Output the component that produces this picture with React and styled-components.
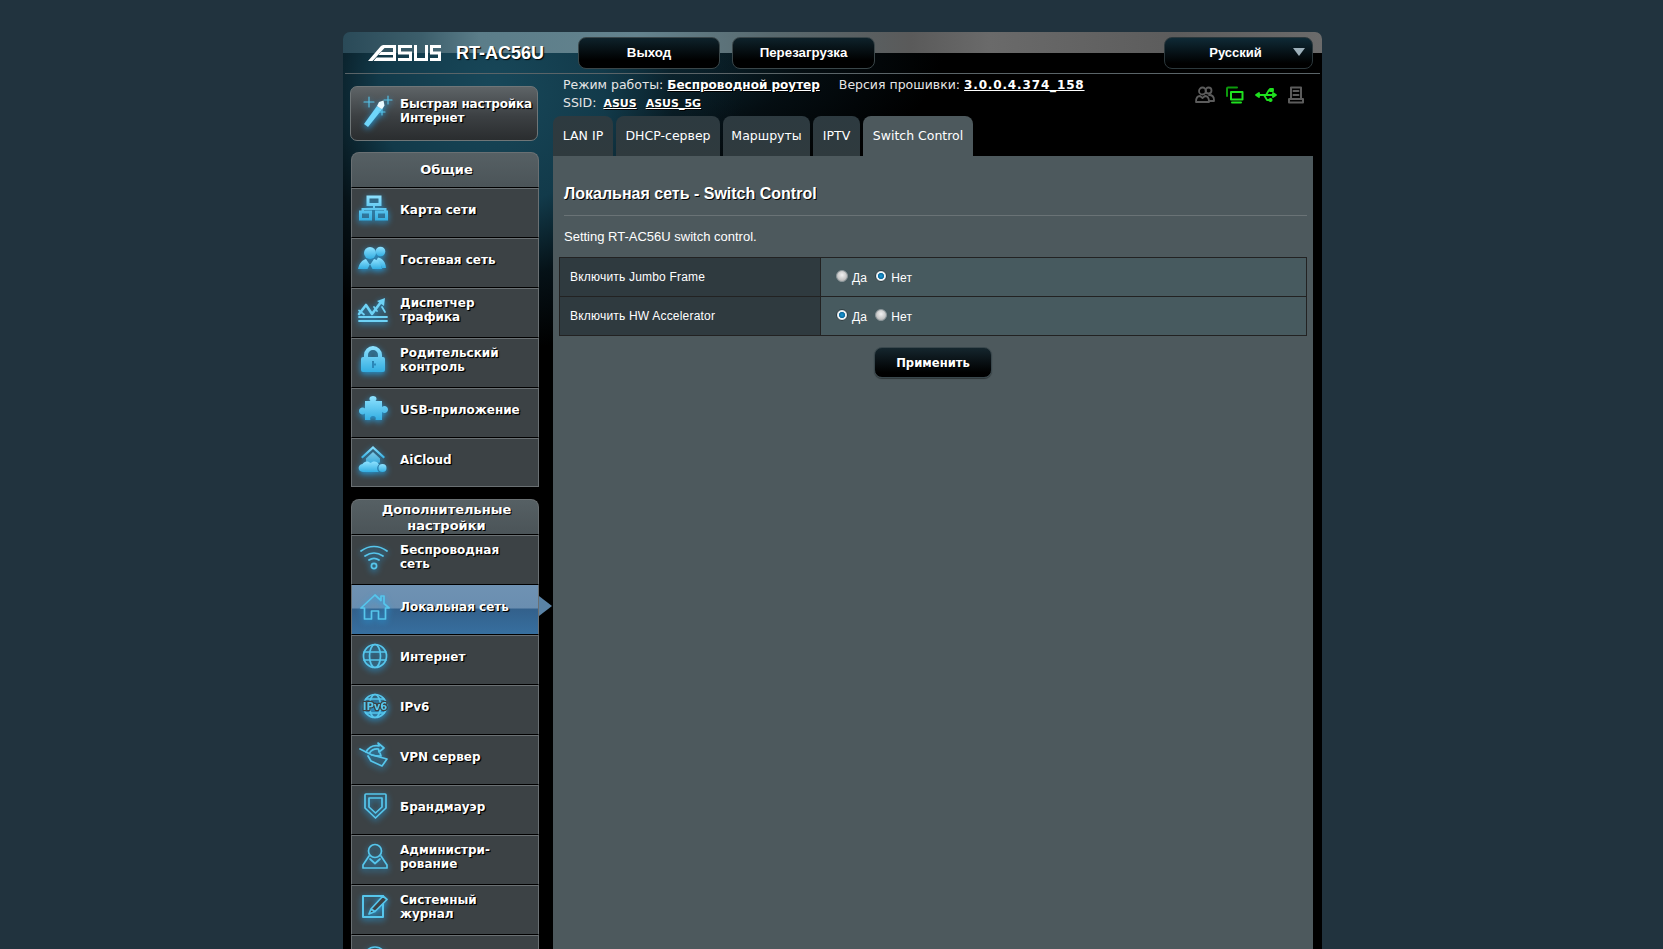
import React from "react";
import styled, { createGlobalStyle, css } from "styled-components";

const Global = createGlobalStyle`
  html, body { margin: 0; padding: 0; height: 100%; overflow: hidden; background: #21333e; }
  #root { height: 100%; }
`;
const verdana = `"DejaVu Sans", Verdana, sans-serif`;
const arial = `"Liberation Sans", Arial, sans-serif`;

const Page = styled.div`
  height: 100vh; overflow: hidden; background: #21333e; padding: 32px 0 0 343px; box-sizing: border-box;
`;
const Panel = styled.div`
  width: 979px; height: 1100px; border-radius: 7px 7px 0 0; overflow: hidden; color: #fff;
  background:
    linear-gradient(90deg, #2a4a58 0, #3c5e6b 8%, #5b7d89 14%, #64838e 30%, #58696e 44%, #5a5a5a 58%, #6a6a6a 66%, #5c5c5c 85%, #6b6b6b 100%) 0 0 / 100% 21px no-repeat,
    radial-gradient(ellipse 250px 260px at 150px 60px, #18485a 0, #123a4a 45%, rgba(10,32,42,.55) 72%, rgba(0,0,0,0) 100%),
    radial-gradient(ellipse 340px 150px at 260px 20px, #0f3442 0, rgba(10,30,40,.45) 60%, rgba(0,0,0,0) 100%),
    #000;
`;
const TopBar = styled.header`
  height: 41px; border-bottom: 1px solid #5a6468; margin: 0 2px; display: flex; align-items: flex-start;
`;
const Logo = styled.svg`
  width: 73px; height: 16px; margin: 13px 0 0 23px; flex: none; fill: #fff;
`;
const Model = styled.div`
  font: bold 18px/20px ${arial}; margin: 11px 0 0 15px; width: 122px; flex: none; text-shadow: 1px 1px 1px #000;
`;
const TopButton = styled.button`
  width: ${p => p.$w}px; height: 32px; margin: 5px 12px 0 0; flex: none; border-radius: 8px;
  background: linear-gradient(180deg, #0e222b 0, #000 75%); border: 1px solid #3a4649; color: #fff;
  font: bold 13.3px ${arial}; padding: 0 0 2px; text-shadow: 1px 1px 0 #000;
`;
const LangBox = styled.div`
  position: relative; margin: 5px 7px 0 auto; width: 149px; height: 32px; box-sizing: border-box;
  border-radius: 8px; border: 1px solid #2c383c; background: linear-gradient(180deg, #0f2a36 0, #000 85%);
  font: bold 13px/30px ${arial}; text-align: center; padding-right: 6px;
  &::after {
    content: ""; position: absolute; right: 7px; top: 10px; width: 0; height: 0;
    border-left: 6px solid transparent; border-right: 6px solid transparent; border-top: 8px solid #9db0ba;
  }
`;
const Columns = styled.div` display: flex; align-items: flex-start; `;
const Sidebar = styled.nav`
  width: 210px; flex: none; padding: 12px 0 0 7px; box-sizing: border-box;
`;
const QuickButton = styled.div`
  width: 188px; height: 55px; box-sizing: border-box; border-radius: 7px; border: 1px solid #6f7678;
  background: linear-gradient(180deg, #5e6467 0, #3c4043 55%, #2a2d2f 100%);
  display: flex; align-items: center; padding: 0 0 6px 10px; gap: 5px;
  margin-bottom: 11px;
`;
const MenuLabel = styled.span`
  font: bold 12px/14px ${verdana}; text-shadow: 1px 1px 0 #000, 1px 1px 1px #000; color: #fff;
`;
const QuickLabel = styled(MenuLabel)` letter-spacing: -.15px; `;
const Group = styled.div`
  width: 188px; margin-left: 1px; margin-bottom: 12px;
`;
const GroupTitle = styled.div`
  height: 35px; box-sizing: border-box; border: 1px solid #6a7073; border-bottom: 0; border-radius: 8px 8px 0 0;
  background: linear-gradient(180deg, #566064 0, #4b5458 100%); padding: ${p => p.$two ? 1 : 0}px 0 0 3px;
  font: bold 13px/16px ${verdana}; text-align: center; text-shadow: 1px 1px 0 #000;
  display: flex; align-items: center; justify-content: center;
`;
const Item = styled.div`
  height: 50px; box-sizing: border-box; position: relative; display: flex; align-items: center;
  gap: 11px; padding: 0 0 5px 5px;
  border: 1px solid #6a7073; border-width: 1px 1px 0 1px;
  border-top: 1px solid #000;
  background: linear-gradient(180deg, #6a7073 0, #6a7073 1px, #3c4245 1px);
  ${p => p.$active && css`
    background: linear-gradient(180deg, #6f92b3 0, #6a8eb0 46%, #33618c 50%, #376f9f 100%);
    &::after {
      content: ""; position: absolute; left: 100%; top: 11px; width: 0; height: 0; margin-left: 1px;
      border-top: 10px solid transparent; border-bottom: 10px solid transparent; border-left: 13px solid #5a83a6;
    }
  `}
  ${p => p.$last && css` border-bottom: 1px solid #6a7073; padding-bottom: 4px; `}
`;
const Icon = styled.svg`
  width: 32px; height: 32px; flex: none;
  fill: ${p => p.$fill ? "url(#cy)" : "none"};
  stroke: ${p => p.$fill ? "none" : "#56c6ec"};
  stroke-width: 1.7; stroke-linecap: round; stroke-linejoin: round;
  filter: drop-shadow(0 2px 3px rgba(35,165,235,.9));
  transform: translateX(${p => p.$dx || 0}px);
`;
const Main = styled.main` flex: 1; min-width: 0; padding-right: 9px; `;
const Info = styled.div`
  height: 42px; padding: 2px 0 0 10px; box-sizing: border-box; position: relative;
  font: 12.5px/18px ${verdana}; color: #e6e6e6;
`;
const InfoLine = styled.div` white-space: nowrap; `;
const InfoLink = styled.a`
  font: bold ${p => p.$small ? 11 : 12}px/18px ${verdana}; color: #fff; text-decoration: underline;
  margin-left: ${p => p.$ml || 0}px; margin-right: ${p => p.$mr || 0}px; text-shadow: 1px 1px 0 #000;
  letter-spacing: ${p => p.$ls || 0}px;
`;
const Status = styled.div`
  position: absolute; top: 12px; left: 642px; display: flex; gap: 11px; align-items: center;
`;
const StatusIcon = styled.svg`
  width: ${p => p.$w}px; height: 18px; fill: none; stroke: ${p => p.$on ? "#1fe01f" : "#5c5c5c"};
  stroke-width: 1.8; stroke-linecap: round; stroke-linejoin: round;
`;
const Tabs = styled.div` display: flex; gap: 3px; height: 40px; `;
const Tab = styled.div`
  width: ${p => p.$w}px; height: 40px; box-sizing: border-box; border-radius: 8px 8px 0 0; text-align: center;
  font: 12.5px/40px ${verdana}; color: #fff; white-space: nowrap;
  background: ${p => p.$active ? "#4d595d" : "linear-gradient(180deg, #2d3a40 0, #2f3a3e 100%)"};
`;
const Content = styled.section`
  background: #4d595d; height: 900px; padding: 28px 6px 0 6px; box-sizing: border-box;
`;
const Title = styled.h1`
  margin: 0 0 0 5px; font: bold 16px/20px ${arial}; text-shadow: 1px 1px 0 #000; padding-bottom: 11px;
  border-bottom: 1px solid #6a7376;
`;
const Desc = styled.p` margin: 12px 0 11px 5px; font: 13px/18px ${arial}; color: #fff; `;
const Table = styled.table`
  width: 748px; border-collapse: collapse; table-layout: fixed; margin-top: 0;
`;
const Th = styled.th`
  width: 261px; height: 39px; box-sizing: border-box; border: 1px solid #222; padding: 0 0 0 10px; background: #2f3a3f;
  font: 12px ${arial}; letter-spacing: .2px; text-align: left; color: #fff;
`;
const Td = styled.td`
  height: 39px; box-sizing: border-box; border: 1px solid #222; padding: 2px 0 0 15px; background: #475a5f;
  font: 12px ${arial}; letter-spacing: .2px; color: #fff;
`;
const RadioLabel = styled.label`
  display: inline-flex; align-items: flex-start; margin-right: 8px; line-height: 15px;
`;
const Radio = styled.input.attrs({ type: "radio" })`
  appearance: none; width: 12px; height: 12px; border-radius: 50%; margin: -1px 4px 0 0; flex: none;
  border: 1px solid #8a9599;
  background: radial-gradient(circle at 50% 40%, #f2f2f2 0, #c9c9c9 55%, #a5a5a5 100%);
  &:checked {
    background: radial-gradient(circle at 50% 50%, #1b9ad6 0, #0b6a9e 40%, #f2f6f8 46%, #cfd7da 100%);
    border-color: #2b383c;
  }
`;
const ApplyRow = styled.div` display: flex; justify-content: center; margin-top: 11px; `;
const Apply = styled.button`
  width: 118px; height: 31px; border-radius: 8px; border: 1px solid #39474c; color: #fff;
  background: linear-gradient(180deg, #15262e 0, #000 85%);
  font: bold 11.6px ${verdana}; text-shadow: 1px 1px 0 #000; padding: 0;
  box-shadow: 0 1px 1px rgba(0,0,0,.4);
`;

const P = ({ d, ...r }) => <path d={d} {...r} />;
const line = "#6ed2f5";
const icons = {
  map: { fill: 1, g: <P fillRule="evenodd" d="M9.500 1.500h15v10.500H18v2h11.500v2.500H31v10H18v-10h9v-.5H7v.5h8v10H2v-10h2.500V14H16v-2H9.500zM12.500 4.500V9h9V4.500zM5 19.500V24h7v-4.500zM21 19.500V24h7v-4.500z" /> },
  guest: { fill: 1, g: <>
    <circle cx="13" cy="9" r="6" /><circle cx="23.500" cy="7.500" r="4.800" />
    <P d="M29 24c-.5-6-3-9.500-8-10.500l-2 3.500c3 1.500 5 4 6 7z" />
    <P d="M1 25c1.500-6 4-9 8-10l4 6 4-6c4 1 7 4 8 10h-9.500L13 20l-2.500 5z" />
  </> },
  traffic: { fill: 1, g: <>
    <path d="M2 20L9 11l6 9 9-12" fill="none" stroke={line} strokeWidth="2.600" />
    <path d="M20 7l8-3-1 8z" fill={line} />
    <path d="M2 16.500l5 4M2 23h28M2 27h28M17 13l3 4M25 13l3 5" fill="none" stroke={line} strokeWidth="1.800" />
  </> },
  lock: { fill: 1, g: <P fillRule="evenodd" d="M7 13V11a9 9 0 0118 0v2h1a2 2 0 012 2v11a2 2 0 01-2 2H6a2 2 0 01-2-2V15a2 2 0 012-2zM11 13h10v-2a5 5 0 00-10 0zM15 17v7h2v-2.500h2v-2h-2V17z" /> },
  puzzle: { fill: 1, g: <P d="M8 7h5.500c-2-2-1-5 2.500-5s4.500 3 2.500 5H25v6c2-2 6-1 6 2.500S27 20 25 18v8h-6.500c1-3-.5-4-2.500-4s-3.500 1-2.500 4H8v-6.500C6 21.500 2 20.500 2 17s4-4.500 6-2.500z" /> },
  cloud: { fill: 1, g: <>
    <P d="M4 13L16 2l12 11-1.500 1.500L16 5 5.500 14.500z" />
    <P d="M9 14.500L16 8l7 6.500v4c-2 0-4 1-5 2.500-2-2-5.500-2-8-.5l-1-.5z" opacity=".8" />
    <P d="M6 28c-5.500 0-6-7-.5-8 1.500-3 6-3.500 8-1 2.500-2.500 7-2 8.500 1.500-2.500 2-2.500 5.500 0 7.500z" />
    <circle cx="25.500" cy="24" r="4" />
  </> },
  wifi: { dx: 1, g: <><P d="M3 10c8-6 18-6 26 0M7 15c6-4 12-4 18 0M11 19c3-2 7-2 10 0" /><circle cx="16" cy="25" r="2.600" /></> },
  home: { dx: 2, g: <P d="M2 17L16 4l6 5.500V5h3v7.500L30 17h-3.500v11h-7v-8h-7v8h-7V17z" /> },
  globe: { dx: 2, g: <><circle cx="16" cy="15" r="11.500" /><ellipse cx="16" cy="15" rx="5.500" ry="11.500" /><P d="M5 11h22M5 19h22" /></> },
  ipv6: { dx: 2, g: <>
    <circle cx="16" cy="15" r="11.500" /><ellipse cx="16" cy="15" rx="5.500" ry="11.500" /><P d="M7 8h18M7 22h18" />
    <text x="16" y="18.500" textAnchor="middle" fontSize="10" fontFamily={verdana} fontWeight="700" fill="#56c6ec" stroke="#3c4245" strokeWidth="2.500" paintOrder="stroke">IPv6</text>
  </> },
  vpn: { dx: 2, g: <>
    <P d="M1 8l12 6 15 4-5 7-11-5-3-5" />
    <P d="M7 11c3-5 8-7 13-6l-1-3 6 5-5 4-.5-3c-4-.5-7 1-9 4" />
    <P d="M13 14c3 1 6 1 9 1l-1-3" />
  </> },
  shield: { dx: 2, g: <><P d="M7 3h19c.5 0 1 .5 1 1v13l-10.500 10L6 17V4c0-.5.5-1 1-1z" /><P d="M10 7h13v9l-6.500 6L10 16z" /></> },
  admin: { dx: 2, g: <><circle cx="16" cy="10" r="6.500" /><P d="M10 15L4 24v3h24v-3l-6-9M11 18l5 4.500 5-4.500" /></> },
  log: { dx: 2, g: <>
    <rect x="4" y="5" width="20" height="21" strokeWidth="2" />
    <P d="M10 23l2-5L24 5l4 3.500-12 12zM12 18l4 2.500" fill="#3c4245" />
  </> },
  tools: { dx: 2, g: <circle cx="16" cy="17" r="11" /> },
};
const MIcon = ({ n }) => <Icon viewBox="0 0 32 32" $fill={icons[n].fill} $dx={icons[n].dx}>{icons[n].g}</Icon>;

const general = [["map", ["Карта сети"]], ["guest", ["Гостевая сеть"]], ["traffic", ["Диспетчер", "трафика"]], ["lock", ["Родительский", "контроль"]], ["puzzle", ["USB-приложение"]], ["cloud", ["AiCloud"]]];
const advanced = [["wifi", ["Беспроводная", "сеть"]], ["home", ["Локальная сеть"], 1], ["globe", ["Интернет"]], ["ipv6", ["IPv6"]], ["vpn", ["VPN сервер"]], ["shield", ["Брандмауэр"]], ["admin", ["Администри-", "рование"]], ["log", ["Системный", "журнал"]], ["tools", []]];

const MenuItem = ({ it, last }) => (
  <Item $active={it[2]} $last={last}>
    <MIcon n={it[0]} />
    {it[1].length > 0 && <MenuLabel>{it[1].map((l, i) => <React.Fragment key={i}>{i > 0 && <br />}{l}</React.Fragment>)}</MenuLabel>}
  </Item>
);

export default function App() {
  return (
    <Page>
      <Global />
      <svg width="0" height="0" style={{ position: "absolute" }}>
        <defs>
          <linearGradient id="cy" x1="0" y1="0" x2="0" y2="1">
            <stop offset="0" stopColor="#8fe2ff" />
            <stop offset="1" stopColor="#33aee2" />
          </linearGradient>
        </defs>
      </svg>
      <Panel>
        <TopBar>
          <Logo viewBox="0 0 73 16">
            <path d="M0 16L12.500 1.500C13.500.5 14.500 0 16 0h12v3H16.500L4.500 16z" />
            <path d="M25 0h3v16h-3zM13 7h13v3H10.500zM8.500 12.500H26V16H5.500z" />
            <path d="M30 0h14v3H33v3.500h11V16H30v-3h11V9.500H30z" />
            <path d="M46 0h3v13h8V0h3v16H46z" />
            <path d="M62 0h11v3H65v3.500h8V16H62v-3h8V9.500h-8z" />
          </Logo>
          <Model>RT-AC56U</Model>
          <TopButton $w={142}>Выход</TopButton>
          <TopButton $w={143}>Перезагрузка</TopButton>
          <LangBox>Русский</LangBox>
        </TopBar>
        <Columns>
          <Sidebar>
            <QuickButton>
              <Icon viewBox="0 0 34 34" style={{ width: 34, height: 34, flex: "none" }}>
                <path d="M7 33l-4-3L16 12l5 3.500z" fill="#6fd6fb" stroke="none" />
                <path d="M16 12l5 3.500 2.500-4-1-5-4.500 1.500z" fill="#eafaff" stroke="none" />
                <path d="M8 3v10M3 8h10M27 2v8M23 6h8M21 15v6M18 18h6" strokeWidth="1.100" />
              </Icon>
              <QuickLabel>Быстрая настройка<br />Интернет</QuickLabel>
            </QuickButton>
            <Group>
              <GroupTitle>Общие</GroupTitle>
              {general.map((it, i) => <MenuItem key={i} it={it} last={i === general.length - 1} />)}
            </Group>
            <Group>
              <GroupTitle $two>Дополнительные<br />настройки</GroupTitle>
              {advanced.map((it, i) => <MenuItem key={i} it={it} />)}
            </Group>
          </Sidebar>
          <Main>
            <Info>
              <InfoLine>
                Режим работы: <InfoLink $mr={15}>Беспроводной роутер</InfoLink> Версия прошивки: <InfoLink $ls={.85}>3.0.0.4.374_158</InfoLink>
              </InfoLine>
              <InfoLine>
                SSID: <InfoLink $small $ml={3}>ASUS</InfoLink> <InfoLink $small $ml={5}>ASUS_5G</InfoLink>
              </InfoLine>
              <Status>
                <StatusIcon viewBox="0 0 20 18" $w={20}>
                  <circle cx="7.500" cy="5" r="3.500" /><circle cx="13.500" cy="4.500" r="3" />
                  <path d="M1 16c0-4 2-6 4-6l2.500 2L10 10c2 0 4 2 4 6zM14 9c3 0 5 2 5 5v1h-4" />
                </StatusIcon>
                <StatusIcon viewBox="0 0 18 18" $w={18} $on>
                  <path d="M1 10V2.500C1 2 1.500 1.500 2 1.500h9" stroke="#0c9a0c" strokeWidth="2" />
                  <path d="M5 6h11.500v7.500H5zM6 16.500h9" strokeWidth="2" />
                </StatusIcon>
                <StatusIcon viewBox="0 0 22 18" $w={22} $on>
                  <path d="M2 9h18M11 9l3-5h3M9 9l3 5h3" />
                  <path d="M1 9l3-2v4zM21 9l-3-2v4z" fill="#1fe01f" />
                  <rect x="15" y="3" width="3" height="2" fill="#1fe01f" /><circle cx="15.500" cy="14" r="1.200" fill="#1fe01f" />
                </StatusIcon>
                <StatusIcon viewBox="0 0 16 18" $w={16}>
                  <path d="M3 1.500h10V13H3zM1 16.500h14V13H1zM5.500 5h5M5.500 9h5" strokeWidth="2" />
                </StatusIcon>
              </Status>
            </Info>
            <Tabs>
              <Tab $w={60}>LAN IP</Tab>
              <Tab $w={104}>DHCP-сервер</Tab>
              <Tab $w={87}>Маршруты</Tab>
              <Tab $w={47}>IPTV</Tab>
              <Tab $w={110} $active>Switch Control</Tab>
            </Tabs>
            <Content>
              <Title>Локальная сеть - Switch Control</Title>
              <Desc>Setting RT-AC56U switch control.</Desc>
              <Table>
                <tbody>
                  <tr>
                    <Th>Включить Jumbo Frame</Th>
                    <Td>
                      <RadioLabel><Radio name="jumbo" />Да</RadioLabel>
                      <RadioLabel><Radio name="jumbo" defaultChecked />Нет</RadioLabel>
                    </Td>
                  </tr>
                  <tr>
                    <Th>Включить HW Accelerator</Th>
                    <Td>
                      <RadioLabel><Radio name="hw" defaultChecked />Да</RadioLabel>
                      <RadioLabel><Radio name="hw" />Нет</RadioLabel>
                    </Td>
                  </tr>
                </tbody>
              </Table>
              <ApplyRow><Apply>Применить</Apply></ApplyRow>
            </Content>
          </Main>
        </Columns>
      </Panel>
    </Page>
  );
}
